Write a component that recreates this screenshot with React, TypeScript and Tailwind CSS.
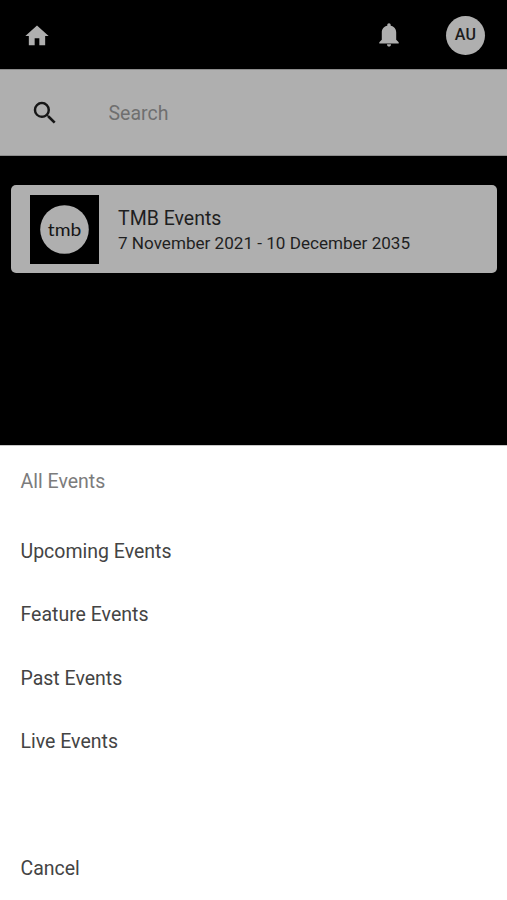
import { MdHome, MdSearch } from "react-icons/md";

const FILTERS = ["Upcoming Events", "Feature Events", "Past Events", "Live Events"];

function BellIcon() {
  return (
    <svg width="20" height="24" viewBox="0 0 20 24" fill="currentColor">
      <path d="M10 .3c-1 0-1.700.8-1.700 1.700v.7C5 3.400 2.800 6 2.800 9.400v7.400L.3 19.200v1.200h19.400v-1.200L17.200 16.800V9.400c0-3.400-2.200-6-5.500-6.700V2c0-.9-.7-1.700-1.700-1.700z" />
      <path d="M8 21.200h4c0 1.400-.8 2.300-2 2.300s-2-.9-2-2.300z" />
    </svg>
  );
}

function TopBar() {
  return (
    <header className="flex h-[69px] items-center pl-[23px] pr-[22px] pt-px">
      <button aria-label="Home" className="pt-px">
        <MdHome size={28} />
      </button>
      <button aria-label="Notifications" className="ml-auto mr-[47px]">
        <BellIcon />
      </button>
      <div className="flex size-[39px] items-center justify-center rounded-full bg-[#afafaf] text-base font-medium tracking-[0.3px] text-[#1c1c1c]">
        AU
      </div>
    </header>
  );
}

function SearchBar() {
  return (
    <div className="flex h-[87px] items-center border-y border-[#8c8c8c] bg-[#afafaf] pl-[30px]">
      <MdSearch size={30} className="text-[#161616]" />
      <input
        type="search"
        placeholder="Search"
        className="ml-[48.5px] w-72 bg-transparent pt-0.5 text-[19.5px] text-[#222] placeholder-[#6f6f6f] outline-none"
      />
    </div>
  );
}

function EventLogo() {
  return (
    <svg width="69" height="69" viewBox="0 0 69 69" className="shrink-0">
      <rect width="69" height="69" fill="#000" />
      <circle cx="34.5" cy="34.5" r="24.3" fill="#afafaf" />
      <text
        x="17.8"
        y="40.5"
        textLength="33.5"
        lengthAdjust="spacingAndGlyphs"
        fill="#161616"
        style={{ fontFamily: "Lato, sans-serif", fontSize: 18, fontWeight: 400 }}
      >
        tmb
      </text>
    </svg>
  );
}

function EventCard() {
  return (
    <article className="mx-[10.5px] mt-[29px] flex h-[88px] items-center rounded-[5px] bg-[#afafaf] pl-[19.5px] text-[#1f1f1f]">
      <EventLogo />
      <div className="ml-[19px] pt-1">
        <h2 className="text-[19.5px] leading-6">TMB Events</h2>
        <p className="text-[17.1px] leading-6">7 November 2021 - 10 December 2035</p>
      </div>
    </article>
  );
}

function FilterSheet() {
  return (
    <section className="h-[455px] border-t border-[#c8c8c8] bg-white pl-[20.5px] text-[19.5px] text-[#444]">
      <h3 className="flex h-[72px] items-center text-[#7c7c7c]">All Events</h3>
      <ul className="pt-[1.5px]">
        {FILTERS.map(label => (
          <li key={label}>
            <button className="flex h-[63.5px] w-full items-center text-left">{label}</button>
          </li>
        ))}
      </ul>
      <button className="mt-[63.5px] flex h-[63.5px] w-full items-center text-left">Cancel</button>
    </section>
  );
}

export default function App() {
  return (
    <div className="flex h-[900px] w-[507px] flex-col overflow-hidden bg-black font-['Roboto',sans-serif] text-[#afafaf]">
      <div className="h-[445px]">
        <TopBar />
        <SearchBar />
        <EventCard />
      </div>
      <FilterSheet />
    </div>
  );
}
